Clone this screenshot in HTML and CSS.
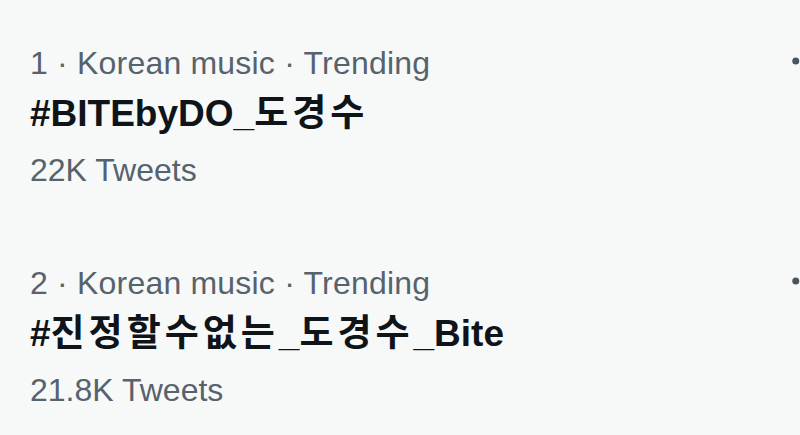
FILE: index.html
```html
<!DOCTYPE html>
<html lang="en">
<head>
<meta charset="utf-8">
<link rel="stylesheet" href="styles.css">
</head>
<body>
<div class="trends">
  <div class="trend">
    <div class="trend-text">
      <div class="meta">1 · Korean music · Trending</div>
      <div class="title">#BITEbyDO_<span class="ko">도경수</span></div>
      <div class="count">22K Tweets</div>
    </div>
    <svg class="more" viewBox="0 0 24 24"><circle cx="5" cy="12" r="2"/><circle cx="12" cy="12" r="2"/><circle cx="19" cy="12" r="2"/></svg>
  </div>
  <div class="trend">
    <div class="trend-text">
      <div class="meta">2 · Korean music · Trending</div>
      <div class="title">#<span class="ko">진정할수없는</span>_<span class="ko">도경수</span>_Bite</div>
      <div class="count">21.8K Tweets</div>
    </div>
    <svg class="more" viewBox="0 0 24 24"><circle cx="5" cy="12" r="2"/><circle cx="12" cy="12" r="2"/><circle cx="19" cy="12" r="2"/></svg>
  </div>
</div>
</body>
</html>
```
FILE: styles.css
```css
html, body {
  margin: 0;
  padding: 0;
  background: #f7f9f9;
  overflow: hidden;
}
body {
  width: 800px;
  height: 435px;
  font-family: "Liberation Sans", Arial, "Noto Sans CJK KR", sans-serif;
}
.trends {
  display: flex;
  flex-direction: column;
  gap: 73px;
  padding-top: 43px;
}
.trend {
  display: flex;
  justify-content: space-between;
  align-items: flex-start;
  padding-left: 30px;
}
.trend-text {
  display: flex;
  flex-direction: column;
}
.meta, .count {
  color: #56626c;
  font-size: 32px;
  line-height: 40px;
}
.meta {
  letter-spacing: 0.2px;
}
.title {
  color: #0f1419;
  font-size: 37px;
  font-weight: 700;
  line-height: 44px;
  margin: 9px 0 14px;
}
.ko {
  letter-spacing: 4px;
}
.more {
  width: 42px;
  height: 42px;
  fill: #4a545c;
  margin-top: -3px;
  margin-right: -29px;
  flex: none;
}
```
